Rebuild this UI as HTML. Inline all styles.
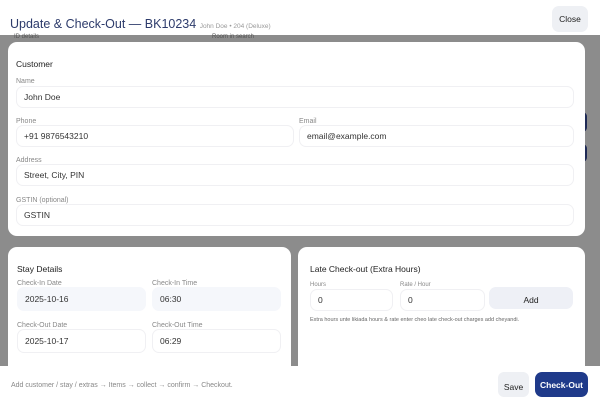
<!DOCTYPE html>
<html><head><style>
*{box-sizing:border-box;margin:0;padding:0}
body{width:600px;height:400px;overflow:hidden;position:relative;background:#8c8c8c;font-family:"Liberation Sans",sans-serif;color:#222}
.a{position:absolute}
.card{position:absolute;background:#fff;border-radius:9px}
.lbl{position:absolute;font-size:7px;color:#888}
.in{position:absolute;border:1px solid #f0f0f3;border-radius:7px;background:#fff;font-size:8.5px;color:#333;padding-left:7px;display:flex;align-items:center}
.in.g{background:#f5f7fb;border-color:#f5f7fb}
.h{position:absolute;font-size:8.5px;color:#222}
</style></head><body>
<div class="a" style="left:0;top:0;width:600px;height:35px;background:#fff"></div>
<div class="a" style="left:10px;top:17px;font-size:12.5px;color:#2d3b6b">Update &amp; Check-Out — BK10234 <span style="font-size:6.5px;color:#999">John Doe • 204 (Deluxe)</span></div>
<div class="a" style="left:552px;top:6px;width:36px;height:26px;background:#eef0f4;border-radius:7px;font-size:8.5px;display:flex;align-items:center;justify-content:center">Close</div>
<div class="a" style="left:14px;top:34px;font-size:6px;color:#555">ID details</div>
<div class="a" style="left:212px;top:34px;font-size:6px;color:#555">Room in search</div>
<div class="a" style="left:578px;top:112px;width:9px;height:20px;background:#1e2a55;border-radius:5px"></div>
<div class="a" style="left:578px;top:144px;width:9px;height:18px;background:#1e2a55;border-radius:5px"></div>

<div class="card" style="left:8px;top:42px;width:577px;height:194px">
<div class="h" style="left:8px;top:17px">Customer</div>
<div class="lbl" style="left:8px;top:36px">Name</div>
<div class="in" style="left:8px;top:44px;width:558px;height:22px">John Doe</div>
<div class="lbl" style="left:8px;top:76px">Phone</div>
<div class="in" style="left:8px;top:83px;width:278px;height:22px">+91 9876543210</div>
<div class="lbl" style="left:291px;top:76px">Email</div>
<div class="in" style="left:291px;top:83px;width:275px;height:22px">email@example.com</div>
<div class="lbl" style="left:8px;top:115px">Address</div>
<div class="in" style="left:8px;top:122px;width:558px;height:22px">Street, City, PIN</div>
<div class="lbl" style="left:8px;top:155px">GSTIN (optional)</div>
<div class="in" style="left:8px;top:162px;width:558px;height:22px">GSTIN</div>
</div>

<div class="card" style="left:8px;top:247px;width:283px;height:130px">
<div class="h" style="left:9px;top:17px">Stay Details</div>
<div class="lbl" style="left:9px;top:33px">Check-In Date</div>
<div class="in g" style="left:9px;top:40px;width:129px;height:24px">2025-10-16</div>
<div class="lbl" style="left:144px;top:33px">Check-In Time</div>
<div class="in g" style="left:144px;top:40px;width:129px;height:24px">06:30</div>
<div class="lbl" style="left:9px;top:75px">Check-Out Date</div>
<div class="in" style="left:9px;top:82px;width:129px;height:24px">2025-10-17</div>
<div class="lbl" style="left:144px;top:75px">Check-Out Time</div>
<div class="in" style="left:144px;top:82px;width:129px;height:24px">06:29</div>
</div>

<div class="card" style="left:298px;top:247px;width:287px;height:130px">
<div class="h" style="left:12px;top:17px">Late Check-out (Extra Hours)</div>
<div class="lbl" style="left:12px;top:35px;font-size:6px">Hours</div>
<div class="in" style="left:12px;top:42px;width:83px;height:22px">0</div>
<div class="lbl" style="left:102px;top:35px;font-size:6px">Rate / Hour</div>
<div class="in" style="left:102px;top:42px;width:85px;height:22px">0</div>
<div class="a" style="left:191px;top:40px;width:84px;height:22px;background:#eef0f6;border-radius:7px;font-size:8.5px;display:flex;align-items:center;justify-content:center;padding-top:4px">Add</div>
<div class="a" style="left:12px;top:70px;font-size:5.5px;color:#666">Extra hours unte likiada hours &amp; rate enter cheo late check-out charges add cheyandi.</div>
</div>

<div class="a" style="left:0;top:366px;width:600px;height:34px;background:#fff"></div>
<div class="a" style="left:11px;top:382px;font-size:7px;color:#888">Add customer / stay / extras → Items → collect → confirm → Checkout.</div>
<div class="a" style="left:498px;top:372px;width:31px;height:25px;background:#eef0f4;border-radius:6px;font-size:8.5px;display:flex;align-items:center;justify-content:center;padding-top:5px">Save</div>
<div class="a" style="left:535px;top:372px;width:53px;height:25px;background:#1f3a8a;border-radius:7px;font-size:8.5px;color:#fff;font-weight:bold;display:flex;align-items:center;justify-content:center">Check-Out</div>
</body></html>
